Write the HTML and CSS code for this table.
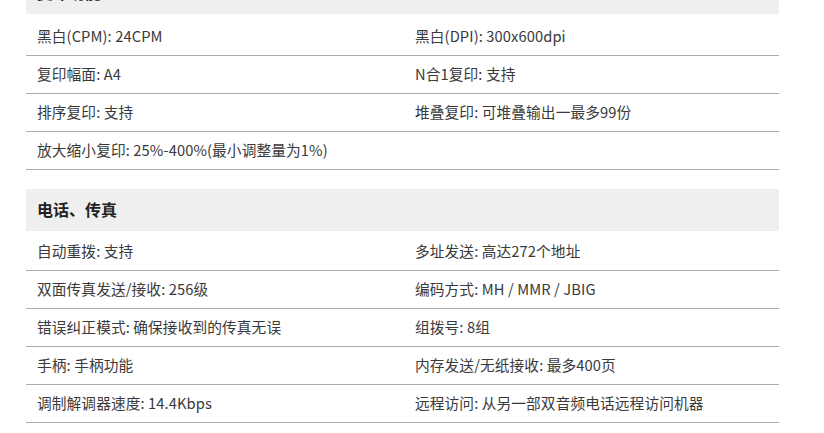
FILE: index.html
```html
<!DOCTYPE html>
<html lang="zh-CN">
<head>
<meta charset="utf-8">
<link rel="stylesheet" href="styles.css">
</head>
<body>
<div class="specs">
  <section class="group group-first">
    <h3 class="group-title">复印功能</h3>
    <div class="grid">
      <div class="cell">黑白(CPM): 24CPM</div>
      <div class="cell">黑白(DPI): 300x600dpi</div>
      <div class="cell">复印幅面: A4</div>
      <div class="cell">N合1复印: 支持</div>
      <div class="cell">排序复印: 支持</div>
      <div class="cell">堆叠复印: 可堆叠输出一最多99份</div>
      <div class="cell">放大缩小复印: 25%-400%(最小调整量为1%)</div>
      <div class="cell"></div>
    </div>
  </section>
  <section class="group">
    <h3 class="group-title">电话、传真</h3>
    <div class="grid">
      <div class="cell">自动重拨: 支持</div>
      <div class="cell">多址发送: 高达272个地址</div>
      <div class="cell">双面传真发送/接收: 256级</div>
      <div class="cell">编码方式: MH / MMR / JBIG</div>
      <div class="cell">错误纠正模式: 确保接收到的传真无误</div>
      <div class="cell">组拨号: 8组</div>
      <div class="cell">手柄: 手柄功能</div>
      <div class="cell">内存发送/无纸接收: 最多400页</div>
      <div class="cell">调制解调器速度: 14.4Kbps</div>
      <div class="cell">远程访问: 从另一部双音频电话远程访问机器</div>
    </div>
  </section>
</div>
</body>
</html>
```
FILE: styles.css
```css
html, body {
  margin: 0;
  padding: 0;
  background: #ffffff;
}
body {
  font-family: "Noto Sans CJK SC", "Noto Sans", sans-serif;
  color: #333333;
  overflow: hidden;
}
.specs {
  width: 753px;
  margin: -28px 0 0 26px;
  display: flex;
  flex-direction: column;
  gap: 19px;
}
.group-title {
  margin: 0;
  height: 42px;
  line-height: 41px;
  padding: 0 11px;
  background: #efefef;
  font-size: 16px;
  font-weight: 700;
  color: #222222;
}
.group-first .grid {
  padding-top: 4px;
}
.grid {
  display: grid;
  grid-template-columns: 378px 1fr;
  padding-top: 2px;
}
.cell {
  height: 35px;
  line-height: 35px;
  padding: 0 11px 2px;
  font-size: 14.7px;
  letter-spacing: 0.1px;
  color: #3a3a3a;
  border-bottom: 1px solid #ababab;
  white-space: nowrap;
}
```
